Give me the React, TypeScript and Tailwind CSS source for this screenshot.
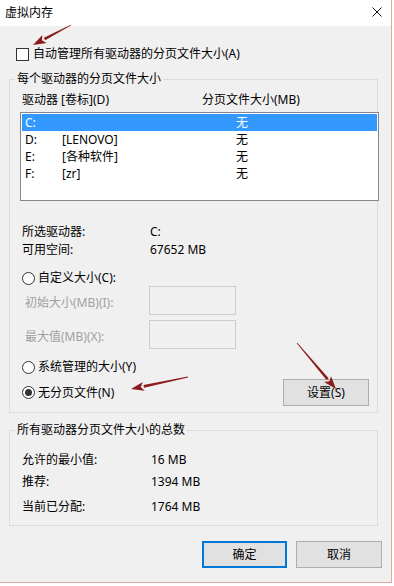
import type { ReactNode } from 'react'

const FONT = '"Noto Sans", "Noto Sans CJK SC", sans-serif'

const drives = [
  { drive: 'C:', label: '', size: '无', selected: true },
  { drive: 'D:', label: '[LENOVO]', size: '无', selected: false },
  { drive: 'E:', label: '[各种软件]', size: '无', selected: false },
  { drive: 'F:', label: '[zr]', size: '无', selected: false },
]

function Radio({ checked = false, children }: { checked?: boolean; children: ReactNode }) {
  return (
    <div className="flex h-[16px] items-center">
      <span className="flex h-[13px] w-[13px] items-center justify-center rounded-full border border-[#333] bg-white">
        {checked && <span className="h-[7px] w-[7px] rounded-full bg-[#333]" />}
      </span>
      <span className="ml-[3px]">{children}</span>
    </div>
  )
}

function Group({ title, className, children }: { title: string; className?: string; children: ReactNode }) {
  return (
    <fieldset className={`ml-[9px] w-[369px] min-w-0 border border-[#dcdcdc] ${className ?? ''}`}>
      <legend className="ml-[5px] h-[16px] px-[2px] leading-[16px]">{title}</legend>
      {children}
    </fieldset>
  )
}

function Arrow({ x1, y1, x2, y2 }: { x1: number; y1: number; x2: number; y2: number }) {
  const dx = x2 - x1
  const dy = y2 - y1
  const len = Math.hypot(dx, dy)
  const ux = dx / len
  const uy = dy / len
  const bx = x2 - ux * 13
  const by = y2 - uy * 13
  const px = -uy
  const py = ux
  const head = `${x2},${y2} ${bx + px * 4.5},${by + py * 4.5} ${bx + ux * 3},${by + uy * 3} ${bx - px * 4.5},${by - py * 4.5}`
  const tail = `${x1 + px * 0.4},${y1 + py * 0.4} ${bx + px * 1.4},${by + py * 1.4} ${bx - px * 1.4},${by - py * 1.4} ${x1 - px * 0.4},${y1 - py * 0.4}`
  return (
    <g fill="#8b1a1a">
      <polygon points={tail} />
      <polygon points={head} />
    </g>
  )
}

export default function App() {
  return (
    <div className="relative h-[586px] w-[394px] bg-white text-[12px] text-black" style={{ fontFamily: FONT }}>
      <div className="h-[583px] w-[392px] border-r border-b border-[#e3a99d] bg-[#f0f0f0]">
        {/* title bar */}
        <div className="flex h-[26px] items-center justify-between bg-white pl-[5px] pr-[9px]">
          <span className="leading-[16px]">虚拟内存</span>
          <svg width="10" height="10" viewBox="0 0 10 10" className="mb-[2px]">
            <path d="M0.5 0.5 L9.5 9.5 M9.5 0.5 L0.5 9.5" stroke="#111" strokeWidth="1" />
          </svg>
        </div>

        <div className="ml-[16px] mt-[20px] flex h-[16px] items-center">
          <span className="h-[13px] w-[13px] border border-[#333] bg-white" />
          <span className="ml-[4px]">自动管理所有驱动器的分页文件大小(A)</span>
        </div>

        <Group title="每个驱动器的分页文件大小" className="mt-[9px] pb-[6px]">
          <div className="mt-[5px] flex h-[16px] items-center pl-[12px]">
            <span className="w-[180px]">驱动器 [卷标](D)</span>
            <span>分页文件大小(MB)</span>
          </div>
          <div className="ml-[10px] mt-[4px] h-[89px] w-[359px] border border-[#828790] bg-white p-px">
            {drives.map((d) => (
              <div
                key={d.drive}
                className={`flex h-[17px] items-center pl-[3px] ${d.selected ? 'bg-[#3399ff] text-white' : ''}`}
              >
                <span className="w-[37px]">{d.drive}</span>
                <span className="w-[174px]">{d.label}</span>
                <span>{d.size}</span>
              </div>
            ))}
          </div>

          <div className="mt-[22px] flex h-[18px] items-center pl-[12px]">
            <span className="w-[128px]">所选驱动器:</span>
            <span>C:</span>
          </div>
          <div className="flex h-[18px] items-center pl-[12px]">
            <span className="w-[128px]">可用空间:</span>
            <span>67652 MB</span>
          </div>

          <div className="ml-[12px] mt-[11px]">
            <Radio>自定义大小(C):</Radio>
          </div>
          <div className="flex h-[29px] items-center pl-[15px] text-[#a0a0a0]">
            <span className="mt-[4px] w-[124px]">初始大小(MB)(I):</span>
            <span className="h-[29px] w-[87px] border border-[#cccccc] bg-[#f0f0f0]" />
          </div>
          <div className="mt-[5px] flex h-[29px] items-center pl-[15px] text-[#a0a0a0]">
            <span className="mt-[4px] w-[124px]">最大值(MB)(X):</span>
            <span className="h-[29px] w-[87px] border border-[#cccccc] bg-[#f0f0f0]" />
          </div>

          <div className="ml-[12px] mt-[10px]">
            <Radio>系统管理的大小(Y)</Radio>
          </div>
          <div className="mt-[4px] flex h-[27px] items-center justify-between pl-[12px] pr-[8px]">
            <Radio checked>无分页文件(N)</Radio>
            <button className="h-[27px] w-[86px] border border-[#adadad] bg-[#e1e1e1] text-[12px]">设置(S)</button>
          </div>
        </Group>

        <Group title="所有驱动器分页文件大小的总数" className="mt-[9px] pb-[10px]">
          <div className="mt-[14px] flex h-[16px] items-center pl-[12px]">
            <span className="w-[129px]">允许的最小值:</span>
            <span>16 MB</span>
          </div>
          <div className="mt-[6px] flex h-[16px] items-center pl-[12px]">
            <span className="w-[129px]">推荐:</span>
            <span>1394 MB</span>
          </div>
          <div className="mt-[9px] flex h-[16px] items-center pl-[12px]">
            <span className="w-[129px]">当前已分配:</span>
            <span>1764 MB</span>
          </div>
        </Group>

        <div className="mt-[15px] flex justify-end gap-[9px] pr-[9px]">
          <button className="h-[27px] w-[85px] border-2 border-[#0078d7] bg-[#e1e1e1] text-[12px]">确定</button>
          <button className="h-[27px] w-[86px] border border-[#adadad] bg-[#e1e1e1] text-[12px]">取消</button>
        </div>
      </div>

      <svg className="pointer-events-none absolute inset-0" width="394" height="586">
        <Arrow x1={71} y1={25} x2={33} y2={45} />
        <Arrow x1={188} y1={377} x2={131} y2={389} />
        <Arrow x1={297} y1={343} x2={336} y2={389} />
      </svg>
    </div>
  )
}
